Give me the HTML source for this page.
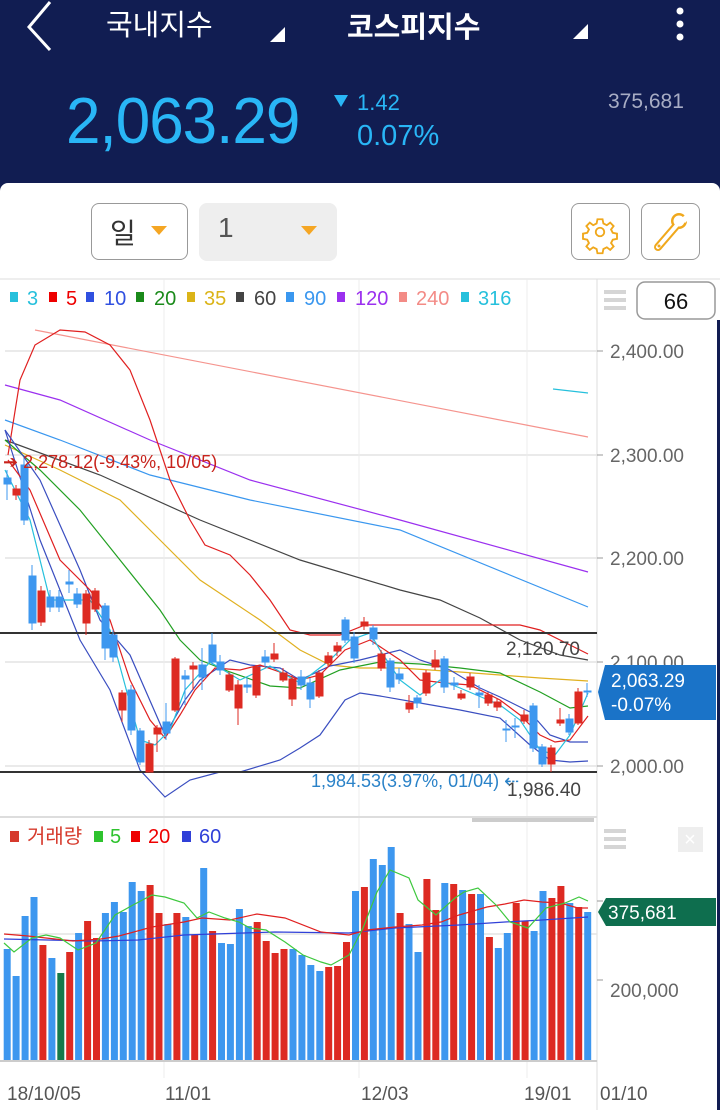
<!DOCTYPE html>
<html><head><meta charset="utf-8"><style>
body{margin:0;width:720px;height:1110px;overflow:hidden;background:#111d52;font-family:"Liberation Sans","Noto Sans CJK KR",sans-serif;position:relative}
.a{position:absolute;white-space:nowrap}
</style></head><body>
<svg class="a" style="left:0;top:0" width="720" height="183">
<polyline points="50,2 29,27 50,50" fill="none" stroke="#fff" stroke-width="3"/>
<polygon points="285,27 285,42 270,42" fill="#fff"/>
<polygon points="588,24 588,39 573,39" fill="#fff"/>
<circle cx="680" cy="11" r="3.5" fill="#fff"/><circle cx="680" cy="24" r="3.5" fill="#fff"/><circle cx="680" cy="37" r="3.5" fill="#fff"/>
<polygon points="334,95 348,95 341,107" fill="#29b6f6"/>
</svg>
<div class="a" style="left:106px;top:2px;font-size:29px;color:#fff">국내지수</div>
<div class="a" style="left:347px;top:4px;font-size:29px;color:#fff;font-weight:bold">코스피지수</div>
<div class="a" style="left:66px;top:84px;font-size:62px;color:#29b6f6;letter-spacing:-1px;transform:scaleY(1.05);transform-origin:top left">2,063.29</div>
<div class="a" style="left:357px;top:90px;font-size:22px;color:#29b6f6">1.42</div>
<div class="a" style="left:357px;top:120px;font-size:29px;color:#29b6f6">0.07%</div>
<div class="a" style="left:608px;top:90px;font-size:21px;color:#a8adc4">375,681</div>
<div class="a" style="left:0;top:183px;width:720px;height:927px;background:#fff;border-radius:8px 8px 0 0"></div>
<div class="a" style="left:91px;top:203px;width:95px;height:55px;border:1.5px solid #999;border-radius:8px;background:#fff"></div>
<div class="a" style="left:110px;top:212px;font-size:28px;color:#333">일</div>
<div class="a" style="left:199px;top:203px;width:138px;height:58px;border-radius:8px;background:#eee"></div>
<div class="a" style="left:218px;top:212px;font-size:28px;color:#555">1</div>
<div class="a" style="left:571px;top:203px;width:57px;height:55px;border:1.5px solid #999;border-radius:8px"></div>
<div class="a" style="left:641px;top:203px;width:57px;height:55px;border:1.5px solid #999;border-radius:8px"></div>
<svg class="a" style="left:0;top:183px" width="720" height="927">
<polygon points="151,43 167,43 159,52" fill="#f5a623"/>
<polygon points="301,43 317,43 309,52" fill="#f5a623"/>
<g transform="translate(600,49) scale(0.85)" fill="none" stroke="#f0a81c" stroke-width="2.2">
<path d="M-3,-15h6l1,5 4,2 4,-3 4,4 -3,4 2,4 5,1v6l-5,1 -2,4 3,4 -4,4 -4,-3 -4,2 -1,5h-6l-1,-5 -4,-2 -4,3 -4,-4 3,-4 -2,-4 -5,-1v-6l5,-1 2,-4 -3,-4 4,-4 4,3 4,-2z"/>
<circle r="5"/></g>
<g stroke-linecap="round">
<line x1="658" y1="64" x2="677" y2="42" stroke="#f0a81c" stroke-width="8"/>
<circle cx="679" cy="38" r="8" fill="#f0a81c"/>
<line x1="658" y1="64" x2="677" y2="42" stroke="#fff" stroke-width="4"/>
<circle cx="679" cy="38" r="5.5" fill="#fff"/>
<polygon points="681,36 688,29 692,33 685,40" fill="#fff"/>
<circle cx="659" cy="63" r="1.5" fill="#f0a81c"/>
</g>
</svg>
<svg class="a" style="left:0;top:0" width="720" height="1110" font-family="Liberation Sans, Noto Sans CJK KR, sans-serif">
<line x1="0" y1="279" x2="720" y2="279" stroke="#ddd"/>
<line x1="597" y1="279" x2="597" y2="1110" stroke="#ddd"/>
<g stroke="#e4e4e4" stroke-width="1.5">
<line x1="5" y1="351" x2="597" y2="351"/><line x1="5" y1="455" x2="597" y2="455"/><line x1="5" y1="558" x2="597" y2="558"/><line x1="5" y1="662" x2="597" y2="662"/><line x1="5" y1="766" x2="597" y2="766"/><line x1="5" y1="934" x2="597" y2="934"/>
</g>
<g stroke="#ececec"><line x1="164" y1="279" x2="164" y2="1078"/><line x1="359" y1="279" x2="359" y2="1078"/><line x1="527" y1="279" x2="527" y2="1078"/></g>
<g stroke="#999"><line x1="597" y1="351" x2="603" y2="351"/><line x1="597" y1="455" x2="603" y2="455"/><line x1="597" y1="558" x2="603" y2="558"/><line x1="597" y1="662" x2="603" y2="662"/><line x1="597" y1="766" x2="603" y2="766"/><line x1="597" y1="901" x2="603" y2="901"/><line x1="597" y1="980" x2="603" y2="980"/></g>
<g font-size="19" fill="#666"><text x="610" y="358">2,400.00</text><text x="610" y="462">2,300.00</text><text x="610" y="565">2,200.00</text><text x="610" y="669">2,100.00</text><text x="610" y="773">2,000.00</text><text x="610" y="997">200,000</text></g>
<g fill="#d5d5d5"><rect x="604" y="290" width="22" height="4"/><rect x="604" y="298" width="22" height="4"/><rect x="604" y="306" width="22" height="4"/><rect x="604" y="829" width="22" height="4"/><rect x="604" y="837" width="22" height="4"/><rect x="604" y="845" width="22" height="4"/></g>
<rect x="637" y="282" width="78" height="37" rx="8" fill="#fff" stroke="#999" stroke-width="1.5"/>
<text x="676" y="309" font-size="22" text-anchor="middle" fill="#111">66</text>
<rect x="717" y="320" width="3" height="790" fill="#111d52"/>
<rect x="678" y="827" width="25" height="25" fill="#eee"/><text x="690" y="846" font-size="20" fill="#fff" text-anchor="middle">×</text>
<g font-size="20">
<rect x="10" y="292" width="8" height="10" fill="#26c0dc"/><text x="27" y="305" fill="#26c0dc">3</text>
<rect x="49" y="292" width="8" height="10" fill="#e00"/><text x="66" y="305" fill="#e00">5</text>
<rect x="86" y="292" width="8" height="10" fill="#3050e0"/><text x="104" y="305" fill="#3050e0">10</text>
<rect x="136" y="292" width="8" height="10" fill="#1a8a1a"/><text x="154" y="305" fill="#1a8a1a">20</text>
<rect x="187" y="292" width="8" height="10" fill="#dbb418"/><text x="204" y="305" fill="#dbb418">35</text>
<rect x="236" y="292" width="8" height="10" fill="#444"/><text x="254" y="305" fill="#444">60</text>
<rect x="286" y="292" width="8" height="10" fill="#3a97ef"/><text x="304" y="305" fill="#3a97ef">90</text>
<rect x="337" y="292" width="8" height="10" fill="#9b30ef"/><text x="355" y="305" fill="#9b30ef">120</text>
<rect x="399" y="292" width="8" height="10" fill="#f38b86"/><text x="416" y="305" fill="#f38b86">240</text>
<rect x="461" y="292" width="8" height="10" fill="#26c0dc"/><text x="478" y="305" fill="#26c0dc">316</text>
</g>
<g fill="none" stroke-width="1.2">
<polyline stroke="#f5948e" points="35,330 588,437"/>
<polyline stroke="#26c0dc" points="553,389 588,393"/>
<polyline stroke="#9b30ef" points="5,385 60,400 150,440 250,480 400,520 588,572"/>
<polyline stroke="#3a97ef" points="5,420 60,440 150,475 250,500 400,530 588,607"/>
<polyline stroke="#444" points="5,440 100,475 200,520 300,560 400,590 440,600 480,618 520,640 560,655 588,660"/>
<polyline stroke="#e0b020" points="5,445 60,470 120,500 160,540 200,580 260,620 300,650 330,665 360,668 400,668 460,672 500,675 540,678 588,681"/>
<polyline stroke="#e02020" points="8,455 20,380 35,345 60,330 85,332 110,345 130,370 150,420 170,480 190,520 205,545 230,555 250,575 270,600 290,630 310,635 340,635 365,625 400,625 480,625 520,625 540,630 560,640 588,654"/>
<polyline stroke="#22a022" points="5,440 40,470 80,510 120,560 160,610 180,640 200,660 230,672 270,686 300,688 340,670 380,662 420,664 460,668 500,673 540,692 570,708 588,706"/>
<polyline stroke="#3a4ec0" points="5,430 40,540 80,640 110,690 140,770 165,797 190,780 220,772 240,772 280,760 300,748 320,735 345,700 360,693 380,696 420,703 460,710 500,718 530,745 550,760 570,762 588,761"/>
<polyline stroke="#3a4ec0" points="5,430 40,480 80,570 100,620 130,655 165,735 185,700 200,680 230,660 250,665 280,668 300,680 330,666 360,660 380,655 400,650 420,660 450,670 480,688 500,697 530,712 550,735 570,742 588,742"/>
<polyline stroke="#e02020" points="8,460 30,490 60,560 90,590 110,620 130,680 150,720 165,738 180,715 195,690 215,668 240,670 260,665 280,672 300,680 320,675 345,650 370,640 400,660 420,680 445,683 470,685 500,700 520,715 540,735 555,742 570,740 588,716"/>
<polyline stroke="#26c0dc" points="5,470 30,520 50,600 90,600 110,630 140,740 155,745 170,730 185,690 210,662 240,680 270,666 300,683 330,660 350,640 370,633 380,650 400,680 420,695 440,680 460,688 500,705 520,720 540,750 555,755 570,735 588,693"/>
</g>
<line x1="0" y1="633" x2="597" y2="633" stroke="#333" stroke-width="2"/>
<line x1="0" y1="772" x2="597" y2="772" stroke="#333" stroke-width="2"/>
<g stroke-width="1">
<g fill="#3d97ef" stroke="#3d97ef">
<line x1="7" y1="470" x2="7" y2="500"/><rect x="4" y="478" width="7" height="6"/>
<line x1="24" y1="458" x2="24" y2="525"/><rect x="21" y="465" width="7" height="55"/>
<line x1="32" y1="565" x2="32" y2="630"/><rect x="29" y="576" width="7" height="47"/>
<line x1="50" y1="590" x2="50" y2="612"/><rect x="47" y="597" width="7" height="10"/>
<line x1="59" y1="590" x2="59" y2="612"/><rect x="56" y="597" width="7" height="10"/>
<line x1="69" y1="570" x2="69" y2="593"/><rect x="66" y="582" width="7" height="2"/>
<line x1="77" y1="588" x2="77" y2="608"/><rect x="74" y="594" width="7" height="10"/>
<line x1="105" y1="603" x2="105" y2="660"/><rect x="102" y="606" width="7" height="42"/>
<line x1="113" y1="630" x2="113" y2="662"/><rect x="110" y="635" width="7" height="22"/>
<line x1="131" y1="685" x2="131" y2="735"/><rect x="128" y="690" width="7" height="40"/>
<line x1="140" y1="728" x2="140" y2="765"/><rect x="137" y="731" width="7" height="31"/>
<line x1="166" y1="703" x2="166" y2="740"/><rect x="163" y="722" width="7" height="11"/>
<line x1="185" y1="670" x2="185" y2="705"/><rect x="182" y="676" width="7" height="3"/>
<line x1="202" y1="648" x2="202" y2="690"/><rect x="199" y="665" width="7" height="12"/>
<line x1="212" y1="633" x2="212" y2="665"/><rect x="209" y="645" width="7" height="17"/>
<line x1="220" y1="655" x2="220" y2="675"/><rect x="217" y="662" width="7" height="8"/>
<line x1="247" y1="678" x2="247" y2="693"/><rect x="244" y="685" width="7" height="2"/>
<line x1="265" y1="650" x2="265" y2="667"/><rect x="262" y="657" width="7" height="5"/>
<line x1="301" y1="670" x2="301" y2="690"/><rect x="298" y="677" width="7" height="8"/>
<line x1="310" y1="678" x2="310" y2="708"/><rect x="307" y="683" width="7" height="16"/>
<line x1="345" y1="617" x2="345" y2="643"/><rect x="342" y="620" width="7" height="20"/>
<line x1="354" y1="632" x2="354" y2="663"/><rect x="351" y="637" width="7" height="21"/>
<line x1="373" y1="625" x2="373" y2="645"/><rect x="370" y="628" width="7" height="11"/>
<line x1="390" y1="658" x2="390" y2="692"/><rect x="387" y="661" width="7" height="26"/>
<line x1="399" y1="668" x2="399" y2="684"/><rect x="396" y="674" width="7" height="5"/>
<line x1="417" y1="695" x2="417" y2="708"/><rect x="414" y="698" width="7" height="5"/>
<line x1="444" y1="656" x2="444" y2="693"/><rect x="441" y="659" width="7" height="28"/>
<line x1="454" y1="677" x2="454" y2="690"/><rect x="451" y="683" width="7" height="2"/>
<line x1="479" y1="685" x2="479" y2="708"/><rect x="476" y="693" width="7" height="2"/>
<line x1="506" y1="720" x2="506" y2="742"/><rect x="503" y="729" width="7" height="1"/>
<line x1="515" y1="718" x2="515" y2="738"/><rect x="512" y="726" width="7" height="1"/>
<line x1="533" y1="703" x2="533" y2="752"/><rect x="530" y="706" width="7" height="42"/>
<line x1="542" y1="744" x2="542" y2="767"/><rect x="539" y="747" width="7" height="17"/>
<line x1="569" y1="714" x2="569" y2="735"/><rect x="566" y="719" width="7" height="13"/>
<line x1="587" y1="683" x2="587" y2="697"/><rect x="584" y="691" width="7" height="1"/>
</g>
<g fill="#dd2a22" stroke="#dd2a22">
<line x1="16" y1="485" x2="16" y2="500"/><rect x="13" y="489" width="7" height="6"/>
<line x1="41" y1="586" x2="41" y2="626"/><rect x="38" y="591" width="7" height="31"/>
<line x1="86" y1="590" x2="86" y2="635"/><rect x="83" y="594" width="7" height="29"/>
<line x1="95" y1="588" x2="95" y2="612"/><rect x="92" y="591" width="7" height="18"/>
<line x1="122" y1="690" x2="122" y2="722"/><rect x="119" y="693" width="7" height="17"/>
<line x1="149" y1="740" x2="149" y2="772"/><rect x="146" y="744" width="7" height="28"/>
<line x1="157" y1="725" x2="157" y2="752"/><rect x="154" y="728" width="7" height="6"/>
<line x1="175" y1="657" x2="175" y2="712"/><rect x="172" y="659" width="7" height="51"/>
<line x1="193" y1="662" x2="193" y2="690"/><rect x="190" y="666" width="7" height="3"/>
<line x1="229" y1="672" x2="229" y2="692"/><rect x="226" y="675" width="7" height="15"/>
<line x1="238" y1="680" x2="238" y2="725"/><rect x="235" y="685" width="7" height="23"/>
<line x1="256" y1="665" x2="256" y2="698"/><rect x="253" y="667" width="7" height="28"/>
<line x1="274" y1="643" x2="274" y2="662"/><rect x="271" y="654" width="7" height="5"/>
<line x1="283" y1="668" x2="283" y2="682"/><rect x="280" y="673" width="7" height="7"/>
<line x1="292" y1="675" x2="292" y2="706"/><rect x="289" y="679" width="7" height="20"/>
<line x1="319" y1="670" x2="319" y2="698"/><rect x="316" y="673" width="7" height="23"/>
<line x1="328" y1="652" x2="328" y2="666"/><rect x="325" y="656" width="7" height="7"/>
<line x1="337" y1="642" x2="337" y2="656"/><rect x="334" y="646" width="7" height="5"/>
<line x1="364" y1="617" x2="364" y2="630"/><rect x="361" y="622" width="7" height="4"/>
<line x1="381" y1="650" x2="381" y2="671"/><rect x="378" y="654" width="7" height="14"/>
<line x1="409" y1="695" x2="409" y2="713"/><rect x="406" y="703" width="7" height="6"/>
<line x1="426" y1="670" x2="426" y2="696"/><rect x="423" y="673" width="7" height="20"/>
<line x1="435" y1="650" x2="435" y2="670"/><rect x="432" y="660" width="7" height="7"/>
<line x1="461" y1="690" x2="461" y2="700"/><rect x="458" y="694" width="7" height="4"/>
<line x1="470" y1="673" x2="470" y2="690"/><rect x="467" y="677" width="7" height="10"/>
<line x1="488" y1="692" x2="488" y2="706"/><rect x="485" y="695" width="7" height="8"/>
<line x1="497" y1="698" x2="497" y2="711"/><rect x="494" y="702" width="7" height="5"/>
<line x1="524" y1="710" x2="524" y2="724"/><rect x="521" y="715" width="7" height="6"/>
<line x1="551" y1="745" x2="551" y2="772"/><rect x="548" y="748" width="7" height="16"/>
<line x1="560" y1="708" x2="560" y2="726"/><rect x="557" y="720" width="7" height="3"/>
<line x1="578" y1="688" x2="578" y2="725"/><rect x="575" y="692" width="7" height="31"/>
</g></g>
<text x="3" y="468" font-size="18" fill="#c8231c">➔ 2,278.12(-9.43%, 10/05)</text>
<text x="506" y="655" font-size="19" fill="#444">2,120.70</text>
<text x="311" y="787" font-size="18" fill="#2a82c8">1,984.53(3.97%, 01/04) ⇠</text>
<text x="507" y="796" font-size="19" fill="#444">1,986.40</text>
<polygon points="598,692 605,665 716,665 716,720 605,720" fill="#1a73c8"/>
<text x="611" y="687" font-size="19" fill="#fff">2,063.29</text><text x="611" y="711" font-size="19" fill="#fff">-0.07%</text>
<polygon points="598,912 606,898 716,898 716,926 606,926" fill="#0e6e4e"/>
<text x="608" y="919" font-size="19" fill="#fff">375,681</text>
<line x1="0" y1="817" x2="597" y2="817" stroke="#ddd" stroke-width="2"/>
<rect x="472" y="818" width="122" height="4" fill="#ccc"/>
<g font-size="20">
<rect x="10" y="831" width="9" height="11" fill="#d63a2c"/><text x="27" y="843" fill="#d63a2c">거래량</text>
<rect x="94" y="831" width="9" height="11" fill="#2ec32e"/><text x="110" y="843" fill="#2ec32e">5</text>
<rect x="131" y="831" width="9" height="11" fill="#e00"/><text x="148" y="843" fill="#e00">20</text>
<rect x="182" y="831" width="9" height="11" fill="#3040d8"/><text x="199" y="843" fill="#3040d8">60</text>
</g>
<g fill="#3d97ef">
<rect x="3.7" y="949" width="7" height="112"/><rect x="12.6" y="976" width="7" height="85"/><rect x="21.6" y="916" width="7" height="145"/><rect x="30.5" y="897" width="7" height="164"/>
<rect x="48.4" y="958" width="7" height="103"/><rect x="75.1" y="933" width="7" height="128"/><rect x="101.9" y="913" width="7" height="148"/><rect x="110.9" y="902" width="7" height="159"/><rect x="119.8" y="912" width="7" height="149"/><rect x="128.7" y="882" width="7" height="179"/><rect x="137.7" y="891" width="7" height="170"/>
<rect x="164.4" y="924" width="7" height="137"/><rect x="182.3" y="917" width="7" height="144"/><rect x="200.2" y="868" width="7" height="193"/><rect x="218" y="943" width="7" height="118"/><rect x="226.9" y="944" width="7" height="117"/><rect x="235.9" y="909" width="7" height="152"/><rect x="244.8" y="926" width="7" height="135"/>
<rect x="289.5" y="949" width="7" height="112"/><rect x="298.4" y="955" width="7" height="106"/><rect x="307.3" y="965" width="7" height="96"/><rect x="316.3" y="971" width="7" height="90"/>
<rect x="352" y="891" width="7" height="170"/><rect x="369.8" y="859" width="7" height="202"/><rect x="378.8" y="865" width="7" height="196"/><rect x="387.7" y="847" width="7" height="214"/><rect x="405.5" y="924" width="7" height="137"/><rect x="414.5" y="952" width="7" height="109"/><rect x="441.3" y="883" width="7" height="178"/><rect x="459.1" y="890" width="7" height="171"/><rect x="477" y="894" width="7" height="167"/><rect x="494.8" y="948" width="7" height="113"/><rect x="503.8" y="933" width="7" height="128"/><rect x="530.6" y="931" width="7" height="130"/><rect x="539.5" y="891" width="7" height="170"/><rect x="566.3" y="903" width="7" height="158"/><rect x="584.2" y="912" width="7" height="149"/>
</g>
<rect x="57.3" y="973" width="7" height="88" fill="#157a4a"/>
<g fill="#dd2a22">
<rect x="39.4" y="945" width="7" height="116"/><rect x="66.2" y="952" width="7" height="109"/><rect x="84.1" y="921" width="7" height="140"/><rect x="93" y="938" width="7" height="123"/>
<rect x="146.6" y="885" width="7" height="176"/><rect x="155.5" y="913" width="7" height="148"/><rect x="173.4" y="913" width="7" height="148"/><rect x="191.2" y="935" width="7" height="126"/><rect x="209.1" y="931" width="7" height="130"/>
<rect x="253.7" y="922" width="7" height="139"/><rect x="262.7" y="941" width="7" height="120"/><rect x="271.6" y="953" width="7" height="108"/><rect x="280.5" y="949" width="7" height="112"/>
<rect x="325.2" y="967" width="7" height="94"/><rect x="334.1" y="966" width="7" height="95"/><rect x="343" y="942" width="7" height="119"/><rect x="360.9" y="887" width="7" height="174"/><rect x="396.6" y="913" width="7" height="148"/>
<rect x="423.4" y="879" width="7" height="182"/><rect x="432.3" y="910" width="7" height="151"/><rect x="450.2" y="884" width="7" height="177"/><rect x="468.1" y="894" width="7" height="167"/><rect x="485.9" y="937" width="7" height="124"/>
<rect x="512.7" y="903" width="7" height="158"/><rect x="521.6" y="921" width="7" height="140"/><rect x="548.4" y="898" width="7" height="163"/><rect x="557.4" y="886" width="7" height="175"/><rect x="575.2" y="907" width="7" height="154"/>
</g>
<g fill="none" stroke-width="1.2">
<polyline stroke="#3040d8" points="4,939 91,941 138,940 184,935 275,932 349,933 395,928 459,925 505,922 542,920 588,917"/>
<polyline stroke="#e02020" points="4,934 28,936 46,938 73,941 101,939 119,936 152,927 184,922 202,918 230,920 257,914 285,918 321,932 349,935 367,930 395,927 422,925 441,922 459,915 487,907 505,904 524,900 542,902 560,903 578,908 588,908"/>
<polyline stroke="#3ec83e" points="4,943 14,952 32,938 46,935 60,938 78,950 96,943 115,915 133,905 152,895 165,897 184,903 197,918 209,912 225,918 239,922 250,928 266,930 285,942 303,955 321,962 331,965 349,955 363,928 377,892 390,870 409,878 418,900 436,915 455,898 464,892 478,888 496,905 510,922 528,928 546,908 565,903 579,897 588,901"/>
</g>
<line x1="0" y1="1061" x2="597" y2="1061" stroke="#ccc" stroke-width="2"/>
<g font-size="19" fill="#555"><text x="7" y="1100">18/10/05</text><text x="165" y="1100">11/01</text><text x="361" y="1100">12/03</text><text x="524" y="1100">19/01</text><text x="600" y="1100">01/10</text></g>
</svg>
</body></html>
